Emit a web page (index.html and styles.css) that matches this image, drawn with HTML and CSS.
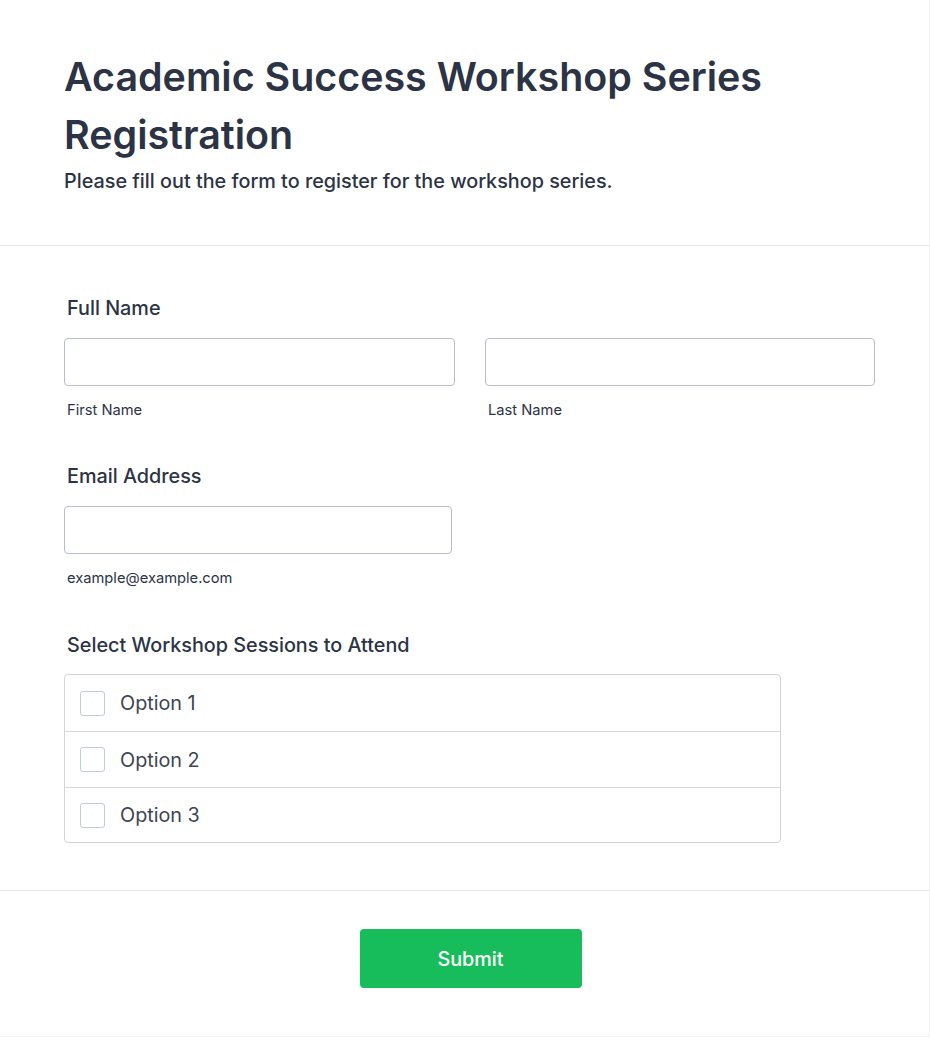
FILE: index.html
```html
<!DOCTYPE html>
<html lang="en">
<head>
<meta charset="utf-8">
<title>Academic Success Workshop Series Registration</title>
<link rel="stylesheet" href="styles.css">
</head>
<body>
<div class="card">
  <header class="header">
    <h1 class="title">Academic Success Workshop Series Registration</h1>
    <p class="subtitle">Please fill out the form to register for the workshop series.</p>
  </header>
  <form class="form">
    <div class="field">
      <label class="label">Full Name</label>
      <div class="name-row">
        <div class="sub-field">
          <input class="input" type="text">
          <span class="sublabel">First Name</span>
        </div>
        <div class="sub-field">
          <input class="input" type="text">
          <span class="sublabel">Last Name</span>
        </div>
      </div>
    </div>
    <div class="field field-email">
      <label class="label">Email Address</label>
      <div class="sub-field email">
        <input class="input" type="email">
        <span class="sublabel">example@example.com</span>
      </div>
    </div>
    <div class="field field-select">
      <label class="label">Select Workshop Sessions to Attend</label>
      <div class="options">
        <label class="option"><span class="box"></span><span class="option-text">Option 1</span></label>
        <label class="option"><span class="box"></span><span class="option-text">Option 2</span></label>
        <label class="option"><span class="box"></span><span class="option-text">Option 3</span></label>
      </div>
    </div>
  </form>
  <div class="footer">
    <button class="submit" type="button">Submit</button>
  </div>
</div>
</body>
</html>
```

FILE: styles.css
```css
* { box-sizing: border-box; }
html, body { margin: 0; padding: 0; background: #ffffff; }
body {
  font-family: Inter, "Noto Sans", "Liberation Sans", sans-serif;
  color: #2c3345;
}
.card {
  width: 930px;
  height: 1037px;
  border-right: 1px solid #f1f1f3;
  border-bottom: 1px solid #f1f1f3;
  background: #fff;
}
.header {
  padding: 48px 64px 51px 64px;
  border-bottom: 1px solid #e3e3e8;
}
.title {
  margin: 0;
  font-size: 39.4px;
  line-height: 58px;
  font-weight: 600;
  color: #2c3345;
}
.subtitle {
  margin: 4px 0 0 0;
  font-size: 19.8px;
  line-height: 26px;
  font-weight: 500;
  color: #2c3345;
}
.form {
  padding: 50px 55px 47px 64px;
  border-bottom: 1px solid #e3e3e8;
}
.field { display: flex; flex-direction: column; }
.field-email { margin-top: 45px; }
.field-select { margin-top: 46px; }
.label {
  padding-left: 3px;
  font-size: 19.8px;
  line-height: 24px;
  font-weight: 500;
  color: #2c3345;
  margin-bottom: 18px;
}
.field-select .label { margin-bottom: 17px; }
.name-row {
  display: grid;
  grid-template-columns: 391px 390px;
  column-gap: 30px;
}
.sub-field { display: flex; flex-direction: column; }
.sub-field.email { width: 388px; }
.input {
  height: 48px;
  width: 100%;
  border: 1px solid #b8bdc9;
  border-radius: 4px;
  background: #fff;
  margin: 0;
  padding: 0 10px;
  font-family: inherit;
  font-size: 16px;
}
.sublabel {
  margin-top: 15px;
  padding-left: 3px;
  font-size: 14.7px;
  line-height: 18px;
  color: #2c3345;
}
.options {
  width: 717px;
  border: 1px solid #d3d3d6;
  border-radius: 4px;
  display: flex;
  flex-direction: column;
}
.option {
  height: 56px;
  display: flex;
  align-items: center;
  padding-left: 15px;
  border-top: 1px solid #d8d8db;
}
.option:first-child { border-top: none; }
.option:last-child { height: 55px; }
.box {
  width: 25px;
  height: 25px;
  border: 1px solid #c3cad8;
  border-radius: 3px;
  background: #fff;
  flex: none;
}
.option-text {
  margin-left: 15px;
  font-size: 19.8px;
  line-height: 24px;
  color: #3d4454;
}
.footer {
  display: flex;
  justify-content: center;
  padding: 38px 0 0 0;
}
.submit {
  width: 222px;
  height: 59px;
  margin-left: 12px;
  background: #18bd5b;
  border: none;
  border-radius: 4px;
  color: #fff;
  font-family: inherit;
  font-size: 19.8px;
  font-weight: 500;
}
```
